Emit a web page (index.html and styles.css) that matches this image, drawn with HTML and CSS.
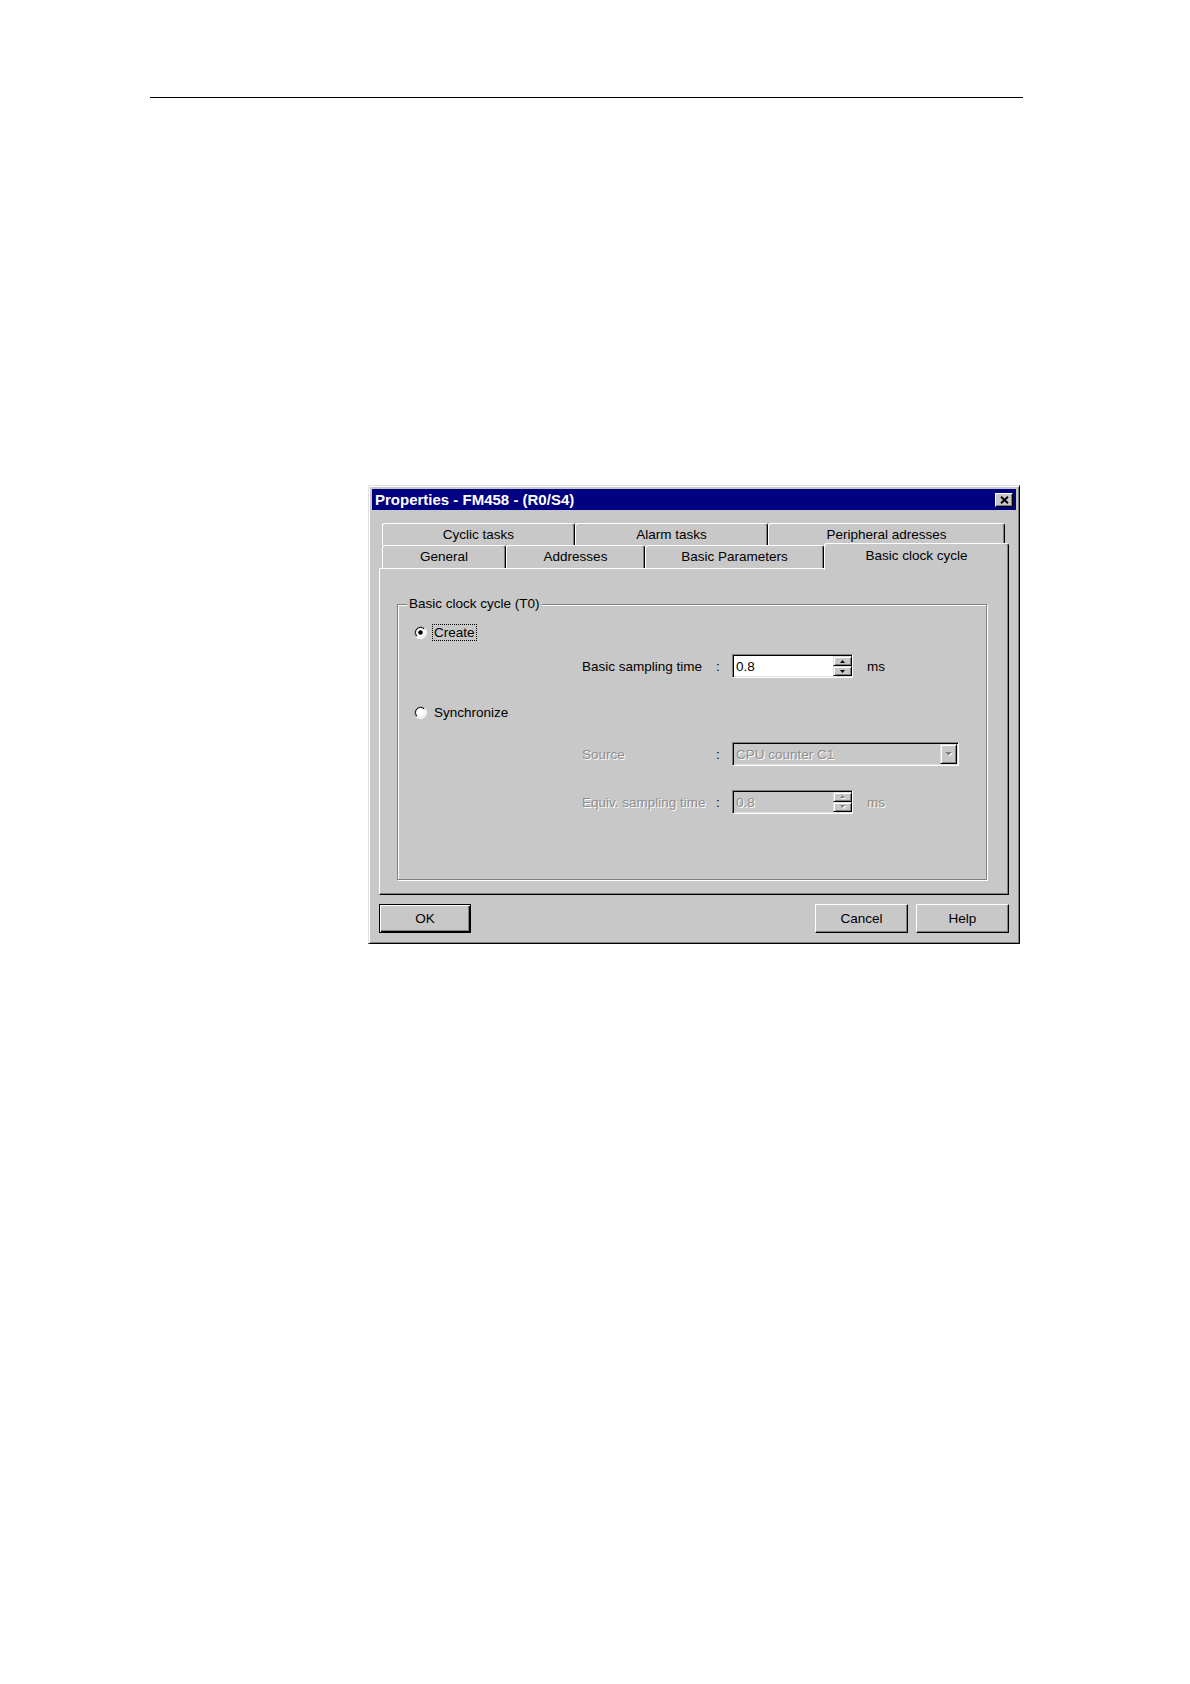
FILE: index.html
```html
<!DOCTYPE html>
<html>
<head>
<meta charset="utf-8">
<title>Properties - FM458 - (R0/S4)</title>
<link rel="stylesheet" href="styles.css">
</head>
<body>
<div class="page">
  <div class="rule"></div>
  <div class="dialog">
    <div class="titlebar">
      <span class="title">Properties - FM458 - (R0/S4)</span>
      <span class="close"><svg width="9" height="8" viewBox="0 0 9 8"><path d="M1 0.8L8 7.2M8 0.8L1 7.2" stroke="#000" stroke-width="1.9" fill="none"/></svg></span>
    </div>
    <div class="dbody">
      <div class="tabs">
        <div class="tabrow row1">
          <div class="tab w-cyclic">Cyclic tasks</div>
          <div class="tab w-alarm">Alarm tasks</div>
          <div class="tab w-periph">Peripheral adresses</div>
        </div>
        <div class="tabrow row2">
          <div class="tab w-general">General</div>
          <div class="tab w-addr">Addresses</div>
          <div class="tab w-params">Basic Parameters</div>
          <div class="tab active w-clock">Basic clock cycle</div>
        </div>
      </div>
      <div class="panel">
        <fieldset class="group">
          <legend class="legend">Basic clock cycle (T0)</legend>
          <div class="opt first">
            <svg class="radio" width="13" height="13" viewBox="0 0 13 13">
              <circle cx="6.5" cy="6.5" r="6" fill="#fff" stroke="#fff"/>
              <path d="M2.26 10.74A6 6 0 0 1 10.74 2.26" stroke="#808080" fill="none"/>
              <circle cx="6.5" cy="6.5" r="5" fill="#fff" stroke="#dfdfdf"/>
              <path d="M2.96 10.04A5 5 0 0 1 10.04 2.96" stroke="#000" fill="none"/>
              <circle cx="6.5" cy="6.5" r="2.3" fill="#000"/>
            </svg>
            <span class="optlabel focus">Create</span>
          </div>
          <div class="param p-sampling">
            <span class="plabel">Basic sampling time</span>
            <span class="colon">:</span>
            <div class="field">
              <span class="val">0.8</span>
              <div class="spin">
                <span class="sbtn"><svg width="5" height="3" viewBox="0 0 5 3"><path d="M2.5 0L5 3H0Z" fill="#000"/></svg></span>
                <span class="sbtn"><svg width="5" height="3" viewBox="0 0 5 3"><path d="M0 0H5L2.5 3Z" fill="#000"/></svg></span>
              </div>
            </div>
            <span class="ms">ms</span>
          </div>
          <div class="opt sync">
            <svg class="radio" width="13" height="13" viewBox="0 0 13 13">
              <circle cx="6.5" cy="6.5" r="6" fill="#fff" stroke="#fff"/>
              <path d="M2.26 10.74A6 6 0 0 1 10.74 2.26" stroke="#808080" fill="none"/>
              <circle cx="6.5" cy="6.5" r="5" fill="#fff" stroke="#dfdfdf"/>
              <path d="M2.96 10.04A5 5 0 0 1 10.04 2.96" stroke="#000" fill="none"/>
            </svg>
            <span class="optlabel">Synchronize</span>
          </div>
          <div class="param p-source">
            <span class="plabel dis">Source</span>
            <span class="colon">:</span>
            <div class="combo">
              <span class="val dis">CPU counter C1</span>
              <span class="dropbtn"><svg width="8" height="5" viewBox="0 0 8 5"><path d="M1 1H8L4.5 4.5Z" fill="#fff"/><path d="M0 0H7L3.5 3.5Z" fill="#808080"/></svg></span>
            </div>
          </div>
          <div class="param p-equiv">
            <span class="plabel dis">Equiv. sampling time</span>
            <span class="colon">:</span>
            <div class="field disabled">
              <span class="val dis">0.8</span>
              <div class="spin">
                <span class="sbtn"><svg width="6" height="4" viewBox="0 0 6 4"><path d="M3.5 1L6 4H1Z" fill="#fff"/><path d="M2.5 0L5 3H0Z" fill="#808080"/></svg></span>
                <span class="sbtn"><svg width="6" height="4" viewBox="0 0 6 4"><path d="M1 1H6L3.5 4Z" fill="#fff"/><path d="M0 0H5L2.5 3Z" fill="#808080"/></svg></span>
              </div>
            </div>
            <span class="ms dis">ms</span>
          </div>
        </fieldset>
      </div>
      <div class="buttons">
        <div class="btn default ok">OK</div>
        <div class="btn cancel">Cancel</div>
        <div class="btn help">Help</div>
      </div>
    </div>
  </div>
</div>
</body>
</html>
```
FILE: styles.css
```css
html, body {
  margin: 0;
  padding: 0;
  background: #fff;
}
body {
  font-family: "Liberation Sans", Arial, sans-serif;
  font-size: 13.5px;
  color: #000;
}
.page {
  padding: 97px 0 0 150px;
}
.rule {
  width: 873px;
  height: 1px;
  background: #000;
}
.dialog {
  margin: 387px 0 0 218px;
  width: 652px;
  height: 459px;
  box-sizing: border-box;
  background: #c8c8c8;
  border: 1px solid;
  border-color: #dfdfdf #000 #000 #dfdfdf;
  box-shadow: inset 1px 1px 0 #fff, inset -1px -1px 0 #808080;
  padding: 3px;
}
.titlebar {
  height: 21px;
  background: #000080;
  display: flex;
  align-items: center;
  justify-content: space-between;
  padding-left: 3px;
}
.title {
  color: #fff;
  font-weight: bold;
  font-size: 15px;
  line-height: 21px;
}
.close {
  width: 18px;
  height: 14px;
  box-sizing: border-box;
  margin-right: 3px;
  background: #c8c8c8;
  border: 1px solid;
  border-color: #fff #000 #000 #fff;
  box-shadow: inset -1px -1px 0 #808080;
  display: flex;
  align-items: center;
  justify-content: center;
}
.close svg { display: block; }
.dbody {
  padding: 13px 0 7px 7px;
}
.tabs {
  margin-left: 3px;
}
.tabrow {
  display: flex;
}
.row1 {
  height: 22px;
}
.row2 {
  height: 25px;
  margin-top: -2px;
  align-items: flex-end;
}
.tab {
  box-sizing: border-box;
  height: 22px;
  border-top: 1px solid #fff;
  border-left: 1px solid #fff;
  border-right: 1px solid #000;
  box-shadow: inset -1px 0 0 #808080;
  border-radius: 3px 3px 0 0;
  background: #c8c8c8;
  text-align: center;
  line-height: 21px;
  white-space: nowrap;
}
.row2 .tab {
  height: 23px;
  line-height: 22px;
}
.row2 .tab.active {
  height: 27px;
  margin-bottom: -2px;
  line-height: 23px;
  position: relative;
  z-index: 1;
}
.w-cyclic { width: 193px; }
.w-alarm { width: 193px; }
.w-periph { width: 237px; }
.w-general { width: 124px; }
.w-addr { width: 139px; }
.w-params { width: 179px; }
.w-clock { width: 185px; }
.panel {
  width: 630px;
  height: 327px;
  box-sizing: border-box;
  border: 1px solid;
  border-color: #fff #000 #000 #fff;
  box-shadow: inset -1px -1px 0 #808080;
  padding: 27px 0 0 17px;
}
.group {
  margin: 0;
  padding: 0;
  width: 590px;
  height: 284px;
  box-sizing: border-box;
  border: 1px solid #808080;
  box-shadow: 1px 1px 0 #fff, inset 1px 1px 0 #fff;
  min-inline-size: auto;
}
.legend {
  margin-left: 9px;
  padding: 0 2px;
  line-height: 16px;
  background: #c8c8c8;
}
.opt {
  display: flex;
  align-items: center;
  height: 17px;
  padding-left: 16px;
}
.opt.first { margin-top: 12px; }
.opt.sync { margin-top: 26px; }
.radio { display: block; }
.optlabel {
  margin-left: 5px;
  padding: 0 1px;
  border: 1px solid transparent;
  line-height: 15px;
}
.optlabel.focus {
  border: 1px dotted #000;
}
.param {
  display: flex;
  align-items: center;
  height: 24px;
  padding-left: 184px;
}
.p-sampling { margin-top: 13px; }
.p-source { margin-top: 21px; }
.p-equiv { margin-top: 24px; }
.plabel {
  width: 134px;
  white-space: nowrap;
}
.colon {
  width: 16px;
}
.ms {
  margin-left: 14px;
}
.dis {
  color: #8e8e8e;
  text-shadow: 1px 1px 0 #fff;
}
.field, .combo {
  height: 24px;
  box-sizing: border-box;
  border: 1px solid;
  border-color: #808080 #fff #fff #808080;
  box-shadow: inset 1px 1px 0 #000, inset -1px -1px 0 #dfdfdf;
  display: flex;
  align-items: center;
  padding: 1px 0 1px 3px;
}
.field {
  width: 121px;
  background: #fff;
}
.field.disabled {
  background: #c8c8c8;
}
.combo {
  width: 227px;
  background: #c8c8c8;
  padding-right: 1px;
}
.val {
  flex: 1;
  white-space: nowrap;
}
.spin {
  width: 19px;
  height: 20px;
  display: flex;
  flex-direction: column;
}
.sbtn, .dropbtn {
  box-sizing: border-box;
  background: #c8c8c8;
  border: 1px solid;
  border-color: #dfdfdf #000 #000 #dfdfdf;
  box-shadow: inset 1px 1px 0 #fff, inset -1px -1px 0 #808080;
  display: flex;
  align-items: center;
  justify-content: center;
}
.sbtn {
  flex: 1;
}
.sbtn svg, .dropbtn svg { display: block; }
.dropbtn {
  width: 17px;
  height: 20px;
}
.buttons {
  display: flex;
  margin-top: 9px;
  width: 630px;
}
.btn {
  box-sizing: border-box;
  width: 93px;
  height: 29px;
  border: 1px solid;
  border-color: #fff #000 #000 #fff;
  box-shadow: inset -1px -1px 0 #808080;
  background: #c8c8c8;
  text-align: center;
  line-height: 27px;
}
.btn.default {
  border: 1px solid #000;
  box-shadow: inset 1px 1px 0 #fff, inset -1px -1px 0 #000, inset -2px -2px 0 #808080;
}
.ok { width: 92px; }
.cancel { margin-left: auto; }
.help { margin-left: 8px; }
```
